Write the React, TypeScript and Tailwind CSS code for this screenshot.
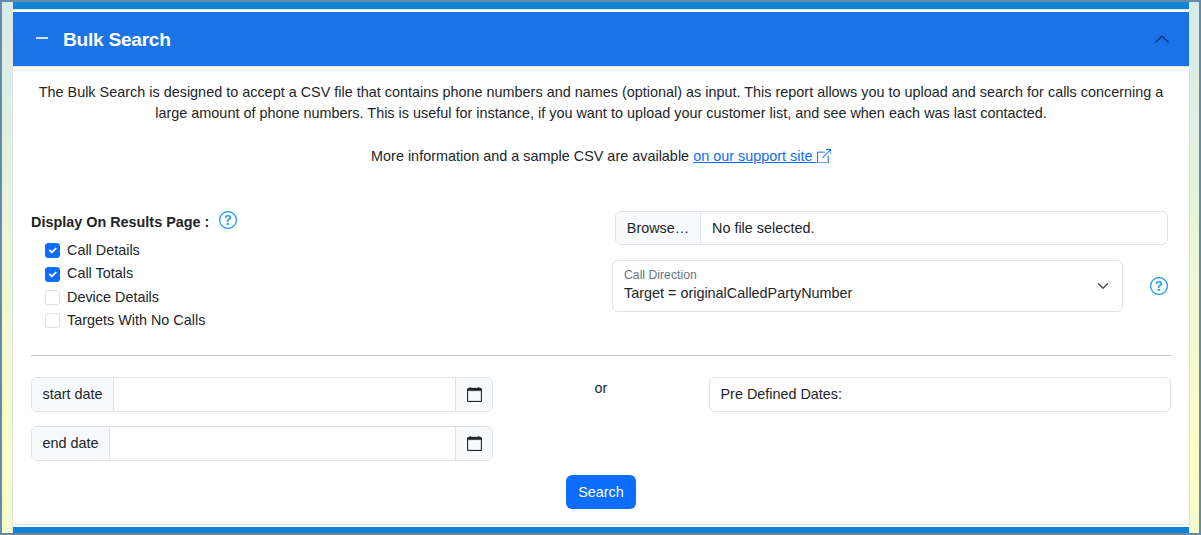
import { ReactNode, useState } from 'react';
import {
  BsBoxArrowUpRight,
  BsCalendar,
  BsChevronDown,
  BsChevronUp,
  BsQuestionCircle,
} from 'react-icons/bs';

const initialOptions = [
  { label: 'Call Details', checked: true },
  { label: 'Call Totals', checked: true },
  { label: 'Device Details', checked: false },
  { label: 'Targets With No Calls', checked: false },
];

export default function App() {
  const [options, setOptions] = useState(initialOptions);

  function toggle(label: string) {
    setOptions(options.map((o) => (o.label === label ? { ...o, checked: !o.checked } : o)));
  }

  return (
    <div className="flex h-[535px] w-[1201px] overflow-hidden border-2 border-[#668ba8] bg-linear-to-b from-[#d5ebe9] via-[#ffffc4] via-87% to-[#f3fbcb] pl-[10px] font-['Liberation_Sans',Arial,sans-serif] text-[14.4px] leading-[21.6px] text-[#212529]">
      <div className="flex w-[1178px] flex-col border-x border-[#dee2e6] bg-white">
        <div className="h-[8px] shrink-0 border-b border-[#dee2e6] bg-[#1184d7]" />

        <header className="mt-[2px] flex h-[54px] shrink-0 items-center bg-[#1b73e8] pr-[19px] pl-[23px] text-white">
          <span className="mr-[15px] mb-[2px] h-[2px] w-[12px] bg-white/80" />
          <h2 className="pt-px text-[19.2px] font-bold tracking-[-0.3px]">Bulk Search</h2>
          <BsChevronUp className="ml-auto size-4 stroke-[0.3] text-[#052c65]" />
        </header>

        <main className="flex flex-1 flex-col border-y border-[#dee2e6] px-[18px] pt-[15px]">
          <div className="text-center tracking-[0.01px]">
            <p className="leading-[21.2px]">
              The Bulk Search is designed to accept a CSV file that contains phone numbers and names (optional) as
              input. This report allows you to upload and search for calls concerning a large amount of phone numbers.
              This is useful for instance, if you want to upload your customer list, and see when each was last
              contacted.
            </p>
            <p className="mt-[21.6px]">
              More information and a sample CSV are available{' '}
              <a href="#" className="text-[#0d6efd] underline">
                on our support site <BsBoxArrowUpRight className="inline size-[14.4px] align-[-2px] stroke-[0.2]" />
              </a>
            </p>
          </div>

          <div className="mt-[43.4px] flex h-[145px] justify-between border-b border-[#c4c4c4]">
            <div>
              <div className="flex h-[22px] items-center">
                <span className="pt-[2px] font-bold">Display On Results Page :</span>
                <HelpIcon className="mb-[4px] ml-[10px]" />
              </div>
              <div className="mt-[6px] ml-[14px]">
                {options.map((o) => (
                  <Check key={o.label} label={o.label} checked={o.checked} onChange={() => toggle(o.label)} />
                ))}
              </div>
            </div>

            <div className="w-[559px]">
              <div className="mr-[3px] ml-[3px] flex h-[34px] overflow-hidden rounded-md border border-[#dee2e6]">
                <button className="w-[85px] border-r border-[#dee2e6] bg-[#f8f9fa] pt-px">Browse…</button>
                <span className="pl-[11px] leading-[32px]">No file selected.</span>
              </div>
              <div className="mt-[15px] flex items-center justify-between pr-[3px]">
                <div className="flex h-[52px] w-[511px] items-center justify-between rounded-md border border-[#dee2e6] pr-[13px] pl-[11px]">
                  <div className="mb-[3px]">
                    <div className="text-[12.24px] leading-[17px] text-[#6c757d]">Call Direction</div>
                    <div className="leading-[18px]">Target = originalCalledPartyNumber</div>
                  </div>
                  <BsChevronDown className="size-3 stroke-1 text-[#343a40]" />
                </div>
                <HelpIcon />
              </div>
            </div>
          </div>

          <div className="mt-[21px] flex justify-between">
            <div className="w-[462px] space-y-[14px]">
              <DateInput label="start date" />
              <DateInput label="end date" />
            </div>
            <span className="mt-px">or</span>
            <div className="h-[35px] w-[462px] rounded-md border border-[#dee2e6] pl-[10.5px] leading-[33px]">
              Pre Defined Dates:
            </div>
          </div>

          <button className="mt-[14px] h-[34px] w-[70px] self-center rounded-md bg-[#0d6efd] pt-px text-white">
            Search
          </button>
        </main>

        <div className="mt-[2px] h-[6px] shrink-0 bg-[#1184d7]" />
      </div>
    </div>
  );
}

function HelpIcon({ className = '' }: { className?: string }) {
  return <BsQuestionCircle className={`size-[18px] stroke-[0.2] text-[#2196f3] ${className}`} />;
}

function Check({ label, checked, onChange }: { label: string; checked: boolean; onChange: () => void }) {
  return (
    <label className="flex h-[23.4px] items-center gap-[7px]">
      <input type="checkbox" checked={checked} onChange={onChange} className="peer sr-only" />
      <span className="flex size-[15px] items-center justify-center rounded-[3px] border border-[#dee2e6] peer-checked:border-[#0d6efd] peer-checked:bg-[#0d6efd]">
        {checked && (
          <svg viewBox="0 0 20 20" className="size-[13px]">
            <path d="m6 10 3 3 6-6" fill="none" stroke="#fff" strokeWidth="2.8" strokeLinecap="round" strokeLinejoin="round" />
          </svg>
        )}
      </span>
      {label}
    </label>
  );
}

function DateInput({ label }: { label: string }) {
  return (
    <div className="flex h-[35px] overflow-hidden rounded-md border border-[#dee2e6]">
      <Addon>{label}</Addon>
      <input className="min-w-0 flex-1 px-3 outline-none" />
      <span className="flex w-[37px] items-center justify-center border-l border-[#dee2e6] bg-[#f8f9fa]">
        <BsCalendar className="size-[15px] stroke-[0.3]" />
      </span>
    </div>
  );
}

function Addon({ children }: { children: ReactNode }) {
  return <span className="border-r border-[#dee2e6] bg-[#f8f9fa] px-[10.6px] leading-[33px]">{children}</span>;
}
